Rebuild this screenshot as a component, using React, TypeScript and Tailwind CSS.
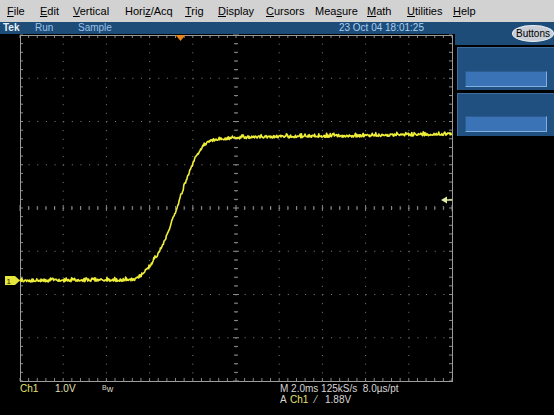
import { useMemo } from "react";

const menuItems: { label: string; u: number; w: number }[] = [
  { label: "File", u: 0, w: 33 },
  { label: "Edit", u: 0, w: 33 },
  { label: "Vertical", u: 0, w: 52 },
  { label: "Horiz/Acq", u: 4, w: 60 },
  { label: "Trig", u: 0, w: 33 },
  { label: "Display", u: 0, w: 48 },
  { label: "Cursors", u: 0, w: 49 },
  { label: "Measure", u: 3, w: 52 },
  { label: "Math", u: 0, w: 40 },
  { label: "Utilities", u: 0, w: 46 },
  { label: "Help", u: 0, w: 40 },
];

// page coords of the step response
const curve: [number, number][] = [
  [20, 281], [134, 280], [142, 275], [150, 266], [158, 254], [165, 240],
  [172, 222], [178, 205], [184, 187], [190, 170], [196, 157], [200, 150],
  [205, 144], [210, 141], [218, 139], [260, 137], [350, 136], [452, 134],
];

function baseY(x: number) {
  for (let i = 0; i < curve.length - 1; i++) {
    const [x0, y0] = curve[i];
    const [x1, y1] = curve[i + 1];
    if (x >= x0 && x <= x1) return y0 + ((y1 - y0) * (x - x0)) / (x1 - x0);
  }
  return curve[curve.length - 1][1];
}

const GX0 = 20;
const GX1 = 452;
const GY0 = 1;
const GY1 = 347;
const DX = (GX1 - GX0) / 10;
const DY = (GY1 - GY0) / 8;

function Graticule() {
  const trace = useMemo(() => {
    let seed = 12345;
    const rnd = () => {
      seed = (seed * 1103515245 + 12345) % 2147483648;
      return seed / 2147483648;
    };
    const pts: string[] = [];
    for (let x = GX0; x <= GX1; x += 0.6) {
      let n = (rnd() - 0.5) * 2.4;
      if (rnd() > 0.8) n -= 1.8;
      pts.push(`${x.toFixed(2)},${(baseY(x) - 34 + n).toFixed(2)}`);
    }
    return "M" + pts.join(" L");
  }, []);

  const cx = GX0 + 5 * DX;
  const cy = GY0 + 4 * DY;
  const minorX = Array.from({ length: 51 }, (_, i) => GX0 + (i * DX) / 5);
  const minorY = Array.from({ length: 41 }, (_, i) => GY0 + (i * DY) / 5);

  return (
    <svg width="455" height="348" className="block">
      {/* dotted division lines */}
      {Array.from({ length: 9 }, (_, i) => GX0 + (i + 1) * DX)
        .filter((_, i) => i !== 4)
        .map((x) => (
          <line key={"v" + x} x1={x} y1={GY0} x2={x} y2={GY1} stroke="#808080" strokeWidth="1" strokeDasharray={`1 ${DY / 5 - 1}`} />
        ))}
      {Array.from({ length: 7 }, (_, i) => GY0 + (i + 1) * DY)
        .filter((_, i) => i !== 3)
        .map((y) => (
          <line key={"h" + y} x1={GX0} y1={y} x2={GX1} y2={y} stroke="#808080" strokeWidth="1" strokeDasharray={`1 ${DX / 5 - 1}`} />
        ))}
      {/* center axes with ticks */}
      {minorX.map((x, i) => (
        <line key={"cx" + i} x1={x} y1={cy - (i % 5 === 0 ? 3 : 2)} x2={x} y2={cy + (i % 5 === 0 ? 3 : 2)} stroke="#8a8a8a" strokeWidth="1" />
      ))}
      {minorY.map((y, i) => (
        <line key={"cy" + i} x1={cx - (i % 5 === 0 ? 3 : 2)} y1={y} x2={cx + (i % 5 === 0 ? 3 : 2)} y2={y} stroke="#8a8a8a" strokeWidth="1" />
      ))}
      <line x1={GX0} y1={cy} x2={GX1} y2={cy} stroke="#8a8a8a" strokeWidth="1" strokeDasharray={`1 ${DX / 5 - 1}`} />
      <line x1={cx} y1={GY0} x2={cx} y2={GY1} stroke="#8a8a8a" strokeWidth="1" strokeDasharray={`1 ${DY / 5 - 1}`} />
      {/* border ticks */}
      {minorX.map((x, i) => (
        <g key={"bx" + i}>
          <line x1={x} y1={GY0} x2={x} y2={GY0 + 3} stroke="#8a8a8a" />
          <line x1={x} y1={GY1} x2={x} y2={GY1 - 3} stroke="#8a8a8a" />
        </g>
      ))}
      {minorY.map((y, i) => (
        <g key={"by" + i}>
          <line x1={GX0} y1={y} x2={GX0 + 3} y2={y} stroke="#8a8a8a" />
          <line x1={GX1} y1={y} x2={GX1 - 3} y2={y} stroke="#8a8a8a" />
        </g>
      ))}
      <rect x={GX0 + 0.5} y={GY0 + 0.5} width={GX1 - GX0} height={GY1 - GY0} fill="none" stroke="#9c9c9c" strokeWidth="1" />

      {/* waveform */}
      <path d={trace} fill="none" stroke="#eeee3a" strokeWidth="1.6" strokeLinejoin="round" />

      {/* ground marker */}
      <polygon points="5,242 15,242 20,246.5 15,251 5,251" fill="#e6e63c" />
      <text x="6.5" y="250" fontSize="8" fill="#202000" fontFamily="Liberation Sans, sans-serif">1</text>
      {/* trigger position */}
      <polygon points="175.5,1 185.5,1 180.5,7" fill="#e8841e" />
      {/* trigger level */}
      <polygon points="441,166 447,162.5 447,169.5" fill="#dcefa4" />
      <line x1="446" y1="166" x2="452" y2="166" stroke="#dcefa4" strokeWidth="1.5" />
    </svg>
  );
}

export default function App() {
  return (
    <div className="w-[554px] h-[415px] overflow-hidden bg-black font-['Liberation_Sans',Arial,sans-serif]">
      {/* menu bar */}
      <div className="flex h-[22px] items-center bg-[#d2d2d2] pl-[7px] text-[11px] text-black">
        {menuItems.map((m) => (
          <div key={m.label} className="shrink-0" style={{ width: m.w }}>
            {m.label.slice(0, m.u)}
            <span className="underline underline-offset-1">{m.label[m.u]}</span>
            {m.label.slice(m.u + 1)}
          </div>
        ))}
      </div>

      <div className="flex h-[393px]">
        <div className="flex w-[455px] flex-col">
          {/* status bar */}
          <div className="relative flex h-[12px] items-center bg-[#1d4c79] text-[10px] leading-none">
            <span className="ml-[3px] w-[32px] font-bold text-[#e8f0f8]">Tek</span>
            <span className="w-[43px] text-[#9cc2e6]">Run</span>
            <span className="text-[#9cc2e6]">Sample</span>
            <span className="ml-auto mr-[31px] text-[#a8d0f2]">23 Oct 04 18:01:25</span>
          </div>
          <Graticule />
          {/* readouts */}
          <div className="flex pt-[1px] text-[10px] leading-[11px]">
            <div className="ml-[20px] flex w-[260px] items-start">
              <span className="w-[35px] text-[#e6e070]">Ch1</span>
              <span className="w-[47px] text-[#e2e0b8]">1.0V</span>
              <span className="text-[#d8d8c0]">
                <span className="relative -top-[2px] text-[7px]">B</span>
                <span className="text-[9px]">w</span>
              </span>
            </div>
            <div className="flex flex-col text-[#d6d6d6]">
              <span>M 2.0ms 125kS/s&nbsp;&nbsp;8.0µs/pt</span>
              <span className="flex">
                <span className="w-[10px]">A</span>
                <span className="w-[25px] text-[#e6e070]">Ch1</span>
                <span className="w-[10px]">⁄</span>
                <span>1.88V</span>
              </span>
            </div>
          </div>
        </div>

        {/* side panel */}
        <div className="flex w-[99px] flex-col">
          <div className="flex h-[23px] items-start justify-end bg-[#1d4c79] pt-[3px]">
            <div className="flex h-[17px] w-[42px] items-center justify-center rounded-[50%] border border-[#e8eef4] bg-[#c9ced6] text-[10px] text-black">
              Buttons
            </div>
          </div>
          <div className="h-[2px]" />
          <div className="ml-[2px] h-[43px] border-l border-t border-[#3f6e9e] bg-[#20507f] pl-[7px] pr-[7px] pt-[23px]">
            <div className="h-[16px] border border-b-[#7fb0e0] border-l-[#2c5c92] border-r-[#7fb0e0] border-t-[#2c5c92] bg-[#3a73b6]" />
          </div>
          <div className="h-[3px]" />
          <div className="ml-[2px] h-[43px] border-l border-t border-[#3f6e9e] bg-[#20507f] pl-[7px] pr-[7px] pt-[22px]">
            <div className="h-[16px] border border-b-[#7fb0e0] border-l-[#2c5c92] border-r-[#7fb0e0] border-t-[#2c5c92] bg-[#3a73b6]" />
          </div>
        </div>
      </div>
    </div>
  );
}
